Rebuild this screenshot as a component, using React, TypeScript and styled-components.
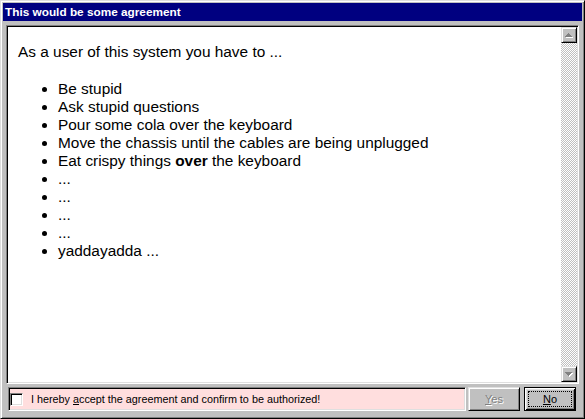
import styled, { createGlobalStyle, css } from "styled-components";

const GlobalStyle = createGlobalStyle`
  html, body {
    margin: 0;
    padding: 0;
    background: #c0c0c0;
  }
  body {
    font-family: "Liberation Sans", Arial, sans-serif;
  }
`;

const raised = css`
  border: 1px solid;
  border-color: #dfdfdf #000 #000 #dfdfdf;
  box-shadow: inset 1px 1px #fff, inset -1px -1px #808080;
`;

const sunken = css`
  border: 1px solid;
  border-color: #808080 #fff #fff #808080;
  box-shadow: inset 1px 1px #000, inset -1px -1px #dfdfdf;
`;

const Window = styled.div`
  ${raised};
  box-sizing: border-box;
  width: 585px;
  height: 419px;
  padding: 2px;
  background: #c0c0c0;
  display: flex;
  flex-direction: column;
`;

const TitleBar = styled.div`
  height: 18px;
  line-height: 18px;
  padding-left: 2px;
  background: #000080;
  color: #fff;
  font-size: 11.8px;
  font-weight: bold;
  white-space: nowrap;
`;

const Body = styled.div`
  flex: 1;
  display: flex;
  flex-direction: column;
  gap: 3px;
  padding: 4px 3px 5px 3px;
  min-height: 0;
`;

const Frame = styled.div`
  ${sunken};
  flex: 1;
  display: flex;
  padding: 1px;
  min-height: 0;
`;

const Content = styled.div`
  flex: 1;
  background: #fff;
  padding: 16px 10px;
  font-size: 15.4px;
  line-height: 18px;
  color: #000;
  overflow: hidden;
`;

const Intro = styled.p`
  margin: 0 0 19px;
`;

const List = styled.ul`
  margin: 0;
  padding-left: 40px;
`;

const ScrollBar = styled.div`
  width: 16px;
  display: flex;
  flex-direction: column;
`;

const Track = styled.div`
  flex: 1;
  background: repeating-conic-gradient(#c0c0c0 0 25%, #fff 0 50%) 0 0 / 2px 2px;
`;

const ArrowButton = styled.div`
  ${raised};
  box-sizing: border-box;
  width: 16px;
  height: 16px;
  background: #c0c0c0;
  position: relative;

  svg {
    position: absolute;
    left: -1px;
    top: -1px;
  }
`;

const BottomRow = styled.div`
  height: 24px;
  display: flex;
  gap: 2px;
  padding: 0 3px 0 2px;
`;

const Agreement = styled.label`
  ${sunken};
  flex: 1;
  display: flex;
  align-items: center;
  gap: 8px;
  padding: 1px;
  background: #ffdede;
  font-size: 10.8px;
  color: #000;
`;

const CheckBox = styled.span`
  ${sunken};
  box-sizing: border-box;
  width: 13px;
  height: 13px;
  background: #fff;
  flex: none;
`;

const Button = styled.button<{ $default?: boolean }>`
  ${raised};
  box-sizing: border-box;
  width: 52px;
  height: 24px;
  margin: 0;
  padding: 0;
  background: #c0c0c0;
  font-family: "Liberation Sans", Arial, sans-serif;
  font-size: 11px;
  color: #000;

  &:disabled {
    color: #808080;
    text-shadow: 1px 1px #fff;
  }

  ${(p) =>
    p.$default &&
    css`
      margin-left: 2px;
      border: 1px solid #000;
      box-shadow: inset 1px 1px #fff, inset -1px -1px #000, inset 2px 2px #dfdfdf,
        inset -2px -2px #808080;
      outline: 1px dotted #000;
      outline-offset: -5px;
    `}
`;

const Key = styled.span`
  text-decoration: underline;
`;

const Arrow = ({ dir }: { dir: "up" | "down" }) => {
  const rows = [1, 3, 5, 7];
  const ordered = dir === "up" ? rows : [...rows].reverse();
  const rects = (dx: number, dy: number, fill: string) =>
    ordered.map((w, i) => (
      <rect
        key={fill + i}
        x={8 - (w + 1) / 2 + dx}
        y={6 + i + dy}
        width={w}
        height={1}
        fill={fill}
      />
    ));
  return (
    <svg width="16" height="16" viewBox="0 0 16 16" shapeRendering="crispEdges">
      {rects(1, 1, "#fff")}
      {rects(0, 0, "#808080")}
    </svg>
  );
};

const items = [
  "Be stupid",
  "Ask stupid questions",
  "Pour some cola over the keyboard",
  "Move the chassis until the cables are being unplugged",
];

export default function App() {
  return (
    <>
      <GlobalStyle />
      <Window>
        <TitleBar>This would be some agreement</TitleBar>
        <Body>
          <Frame>
            <Content>
              <Intro>As a user of this system you have to ...</Intro>
              <List>
                {items.map((t) => (
                  <li key={t}>{t}</li>
                ))}
                <li>
                  Eat crispy things <b>over</b> the keyboard
                </li>
                <li>...</li>
                <li>...</li>
                <li>...</li>
                <li>...</li>
                <li>yaddayadda ...</li>
              </List>
            </Content>
            <ScrollBar>
              <ArrowButton>
                <Arrow dir="up" />
              </ArrowButton>
              <Track />
              <ArrowButton>
                <Arrow dir="down" />
              </ArrowButton>
            </ScrollBar>
          </Frame>
          <BottomRow>
            <Agreement>
              <CheckBox />
              <span>
                I hereby <Key>a</Key>ccept the agreement and confirm to be authorized!
              </span>
            </Agreement>
            <Button disabled>
              <Key>Y</Key>es
            </Button>
            <Button $default>
              <Key>N</Key>o
            </Button>
          </BottomRow>
        </Body>
      </Window>
    </>
  );
}
